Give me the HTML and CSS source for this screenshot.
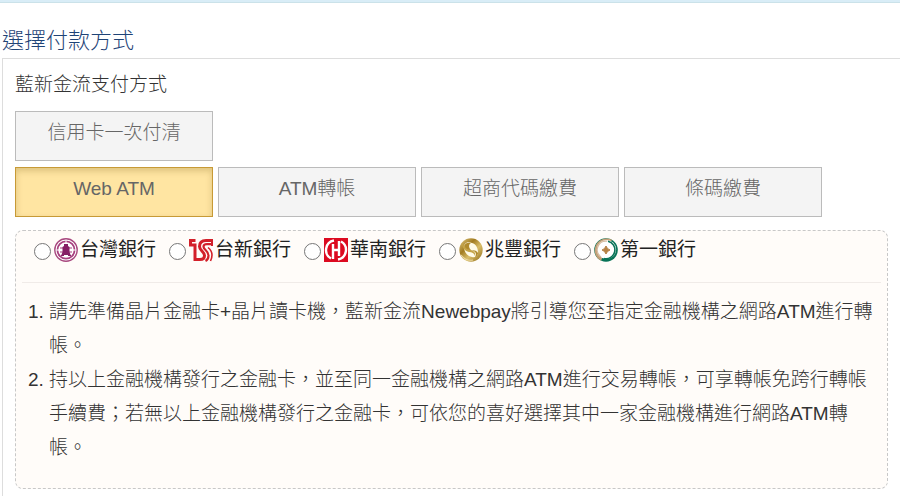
FILE: index.html
```html
<!DOCTYPE html>
<html lang="zh-Hant">
<head>
  <meta charset="UTF-8">
  <title>選擇付款方式</title>
  <meta name="viewport" content="width=device-width, initial-scale=1.0">
  <link rel="stylesheet" href="styles.css">
</head>
<body>

  <div class="top-bar"></div>

  <h2 class="page-title">選擇付款方式</h2>

  <div class="panel">
    <h3 class="panel-title">藍新金流支付方式</h3>

    <!-- 付款方式 -->
    <div class="methods">
      <button type="button" class="method">信用卡一次付清</button>
    </div>
    <div class="methods">
      <button type="button" class="method active">Web ATM</button>
      <button type="button" class="method">ATM轉帳</button>
      <button type="button" class="method">超商代碼繳費</button>
      <button type="button" class="method">條碼繳費</button>
    </div>

    <div class="detail">
      <!-- 銀行選擇 -->
      <div class="banks">
        <div class="bank">
          <input type="radio" name="bank" id="bankBot">
          <label for="bankBot">
            <svg class="logo" viewBox="0 0 24 24" aria-hidden="true">
              <circle cx="12" cy="12" r="11.2" fill="#fff" stroke="#a8487f" stroke-width="1.4"/>
              <circle cx="12" cy="12" r="8.6" fill="none" stroke="#a8407f" stroke-width="1.8"/>
              <path d="M12 2v4M2 12h6M16 12h6" stroke="#fff" stroke-width="1"/>
              <path d="M6 10h3M15 10h3M6 14h3M15 14h3M7 17.500h3M14 17.500h3" stroke="#a8407f" stroke-width="1.2"/>
              <path d="M10 6h4v2l1.500 1v5l1.500 4h-3v-1h-4v1H7l1.500-4V9L10 8z" fill="#861f65"/>
            </svg>
            台灣銀行
          </label>
        </div>
        <div class="bank">
          <input type="radio" name="bank" id="bankTaishin">
          <label for="bankTaishin">
            <svg class="logo" viewBox="0 0 24 24" aria-hidden="true">
              <g fill="none" stroke="#d3202a">
                <path d="M6.500 2.500H1.500V7H6v14.500h5c3 0 4.500-1.500 4.500-4 0-3.500-5-5-5-9C10.500 4.500 13 2.500 17 2.500h7" stroke-width="3"/>
                <path d="M24 6.200h-6c-2.500 0-3.500 1-3.500 2.500 0 3 5 4 5 8.800 0 2.500-1 4.500-3 5.500" stroke-width="2.200"/>
                <path d="M19 9.500c2.500 2 4 4.500 4 7.500 0 2.500-.500 4-1.500 6" stroke-width="1.600"/>
                <path d="M23 1v7" stroke-width="2"/>
              </g>
            </svg>
            台新銀行
          </label>
        </div>
        <div class="bank">
          <input type="radio" name="bank" id="bankHuanan">
          <label for="bankHuanan">
            <svg class="logo" viewBox="0 0 24 24" aria-hidden="true">
              <path d="M0 0h24v24H0z" fill="#dc0a20"/>
              <path d="M10 2.500A9.700 9.700 0 0 0 7 20.500M14 21.500a9.700 9.700 0 0 0 3-18" fill="none" stroke="#fff" stroke-width="2.400"/>
              <path d="M9 6v15M15 3v15M9 12h6" fill="none" stroke="#fff" stroke-width="2.400"/>
            </svg>
            華南銀行
          </label>
        </div>
        <div class="bank">
          <input type="radio" name="bank" id="bankMega">
          <label for="bankMega">
            <svg class="logo" viewBox="0 0 24 24" aria-hidden="true">
              <defs>
                <linearGradient id="gold" x1="0" y1="0" x2="1" y2="1">
                  <stop offset="0" stop-color="#e3cc83"/>
                  <stop offset=".35" stop-color="#a27c22"/>
                  <stop offset=".6" stop-color="#d9bd68"/>
                  <stop offset="1" stop-color="#8d6815"/>
                </linearGradient>
              </defs>
              <circle cx="12" cy="12" r="11.700" fill="url(#gold)"/>
              <path d="M5 9c0-4 4-6 8-4 4 1 6 5 6 10 0 3-3 5-6 4-5-1-8-5-8-10z" fill="#fffbe8"/>
              <path d="M3 5c3 5 5 6 9 7 3 1 5 3 4 6-1-3-3-4-6-4-4-1-7-4-7-9z" fill="#c6a548"/>
              <path d="M12 5c-2 1-3 4 0 7-4 0-6-2-7-4 1-3 4-4 7-3z" fill="#b08a2d"/>
              <path d="M12 12c5 1 6 4 4 7 2-1 3-2 3-4-1-2-3-3-7-3z" fill="#b08a2d"/>
              <path d="M2 17c3 4 7 6 12 5" fill="none" stroke="#ead9a2" stroke-width="1.200"/>
            </svg>
            兆豐銀行
          </label>
        </div>
        <div class="bank">
          <input type="radio" name="bank" id="bankFirst">
          <label for="bankFirst">
            <svg class="logo" viewBox="0 0 24 24" aria-hidden="true">
              <circle cx="12" cy="12" r="11.800" fill="#087357"/>
              <path d="M18 1.800A11.800 11.800 0 1 0 7 22.700L12 12z" fill="#c4a078"/>
              <circle cx="12.500" cy="11.500" r="9.600" fill="#fff"/>
              <path d="M13 3.200A8.700 8.700 0 0 0 7 19" fill="none" stroke="#d5bca0" stroke-width="1.300"/>
              <path d="M14 3.200A8.800 8.800 0 0 1 10 20.500" fill="none" stroke="#087357" stroke-width="1.600"/>
              <path d="M12 8q1 3 4 4-3 1-4 4-1-3-4-4 3-1 4-4z" fill="#b68245" stroke="#b68245"/>
            </svg>
            第一銀行
          </label>
        </div>
      </div>

      <!-- 注意事項 -->
      <ol class="notes">
        <li>請先準備晶片金融卡+晶片讀卡機，藍新金流Newebpay將引導您至指定金融機構之網路ATM進行轉帳。</li>
        <li>持以上金融機構發行之金融卡，並至同一金融機構之網路ATM進行交易轉帳，可享轉帳免跨行轉帳手續費；若無以上金融機構發行之金融卡，可依您的喜好選擇其中一家金融機構進行網路ATM轉帳。</li>
      </ol>
    </div>
  </div>

</body>
</html>
```
FILE: styles.css
```css
body {
  margin: 0;
  background-color: #fff;
  color: #333;
  font-family: "Liberation Sans", "Noto Sans CJK TC", sans-serif;
  font-size: 19px;
  font-weight: 300;
}

.top-bar {
  height: 2px;
  background-color: #d9edf7;
  border-bottom: 1px solid #cbe2e9;
}

.page-title {
  margin: 21px 0 0 2px;
  font-size: 22px;
  font-weight: 300;
  line-height: 34px;
  color: #1f4477;
}

.panel {
  margin-left: 2px;
  padding: 8px 12px;
  border: 1px solid #ddd;
  border-right: none;
}

.panel-title {
  margin: 0 0 8px;
  font-size: 19px;
  font-weight: 300;
  line-height: 36px;
}

.methods {
  display: flex;
  flex-wrap: wrap;
  gap: 5px;
  margin-bottom: 6px;
}

.method {
  width: 198px;
  padding: 4px 10px 11px;
  border: 1px solid #bbb;
  background-color: #f4f4f4;
  color: #666;
  font-family: inherit;
  font-size: 19px;
  font-weight: 300;
  line-height: 33px;
  cursor: pointer;
}

.method.active {
  background-color: #ffe5a2;
  border-color: #c79a36;
  box-shadow: inset 0 3px 6px rgba(120, 90, 20, 0.25);
}

.detail {
  margin-top: 13px;
  padding: 0 6px 23px;
  border: 1px dashed #c8c8c8;
  border-radius: 8px;
  background-color: #fffcf9;
}

.banks {
  display: flex;
  flex-wrap: wrap;
  gap: 0 13px;
  padding: 2px 12px 15px;
  border-bottom: 1px solid #f0ebe8;
}

.bank {
  display: flex;
  align-items: center;
}

.bank input {
  width: 17px;
  height: 17px;
  margin: 2px 3px 0 0;
}

.bank label {
  display: flex;
  align-items: center;
  gap: 2px;
  font-weight: 400;
  line-height: 34px;
  color: #222;
}

.logo {
  width: 24px;
  height: 24px;
}

.notes {
  margin: 12px 0 0;
  padding-left: 27px;
  line-height: 34px;
}
```
